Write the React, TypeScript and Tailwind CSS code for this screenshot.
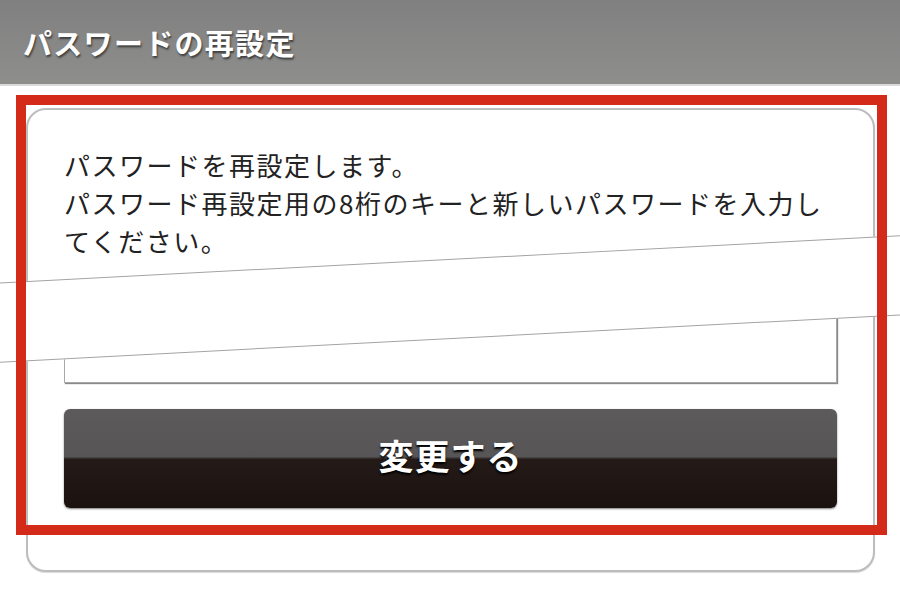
export default function App() {
  return (
    <div className="relative w-[900px] h-[600px] overflow-hidden bg-white font-['Noto_Sans_CJK_JP','Noto_Sans',sans-serif]">
      {/* Header */}
      <div className="h-[86px] border-b-2 border-[#dadada] bg-gradient-to-b from-[#808080] to-[#8e8e8d] flex items-center px-[23px]">
        <h1 className="text-[29px] font-bold tracking-[1.3px] text-white leading-none [text-shadow:1px_2px_2px_rgba(0,0,0,0.55)]">
          パスワードの再設定
        </h1>
      </div>

      {/* Card */}
      <div className="ml-[26px] mr-[25px] mt-[22px] h-[464px] rounded-[20px] border-2 border-[#bdbdbd] bg-white px-[36px] pt-[36px] shadow-[0_1px_1px_rgba(0,0,0,0.15)]">
        <p className="text-[26px] leading-[38px] tracking-[1.5px] text-[#222222]">
          パスワードを再設定します。
          <br />
          パスワード再設定用の8桁のキーと新しいパスワードを入力してください。
        </p>

        <input
          type="password"
          className="mt-[40px] block w-full h-[83px] border border-[#a8a8a8] bg-white shadow-[1px_1px_1px_#8a8a8a] outline-none"
        />

        <button className="mt-[26px] w-full h-[99px] pb-[6px] rounded-[6px] bg-[linear-gradient(to_bottom,#5c5a5b_0%,#575556_48%,#241a18_51%,#1b110f_100%)] shadow-[0_1px_2px_rgba(0,0,0,0.5)] text-[35px] font-bold text-white tracking-[1px] [text-shadow:0_2px_2px_#000]">
          変更する
        </button>
      </div>

      {/* Cut-away band over the page */}
      <div className="absolute left-[-50px] top-[259px] w-[1000px] h-[80px] rotate-[-3deg] bg-white border-y border-[#a3a3a3]" />

      {/* Red highlight frame */}
      <div className="absolute left-[16px] top-[95px] w-[871px] h-[440px] border-[10px] border-[#d42a1a]" />
    </div>
  );
}
